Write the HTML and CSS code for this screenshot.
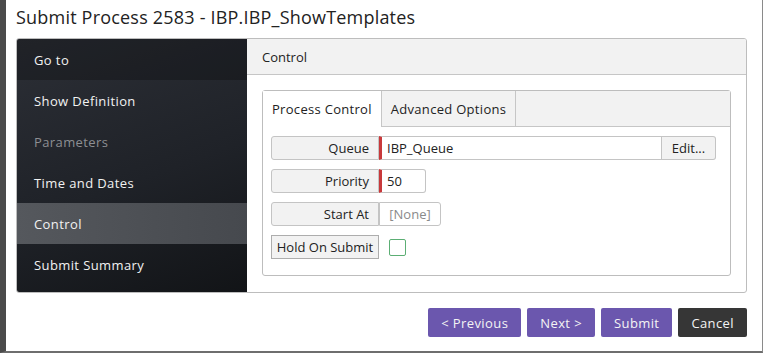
FILE: index.html
```html
<!DOCTYPE html>
<html lang="en">

<head>
    <meta charset="UTF-8">
    <title>Submit Process</title>
    <link rel="stylesheet" href="styles.css">
</head>

<body>
    <div class="dialog">
        <div class="dialog-title">Submit Process 2583 - IBP.IBP_ShowTemplates</div>

        <div class="panel">
            <div class="steps">
                <div class="step step-head">Go to</div>
                <div class="step">Show Definition</div>
                <div class="step disabled">Parameters</div>
                <div class="step">Time and Dates</div>
                <div class="step active">Control</div>
                <div class="step">Submit Summary</div>
            </div>

            <div class="content">
                <div class="content-header">Control</div>
                <div class="tabbox">
                    <div class="tabs">
                        <div class="tab active">Process Control</div>
                        <div class="tab">Advanced Options</div>
                    </div>
                    <div class="tab-body">
                        <div class="field">
                            <div class="field-label">Queue</div>
                            <div class="field-input required wide">IBP_Queue</div>
                            <div class="field-button">Edit...</div>
                        </div>
                        <div class="field">
                            <div class="field-label">Priority</div>
                            <div class="field-input required short">50</div>
                        </div>
                        <div class="field">
                            <div class="field-label">Start At</div>
                            <div class="field-input empty">[None]</div>
                        </div>
                        <div class="field">
                            <div class="field-label plain">Hold On Submit</div>
                            <span class="checkbox"></span>
                        </div>
                    </div>
                </div>
            </div>
        </div>

        <div class="footer">
            <button class="btn btn-primary">&lt; Previous</button>
            <button class="btn btn-primary">Next &gt;</button>
            <button class="btn btn-primary">Submit</button>
            <button class="btn btn-dark">Cancel</button>
        </div>
    </div>
</body>

</html>
```

FILE: styles.css
```css
* {
    margin: 0;
    padding: 0;
    box-sizing: border-box;
}

body {
    background-color: #fff;
    color: #222;
    font-family: "Open Sans", sans-serif;
    font-size: 13px;
}

.dialog {
    height: 353px;
    border-left: 6px solid #4b4b4b;
    border-right: 1px solid #8a8a8a;
    border-bottom: 2px solid #6e6e6e;
    padding: 0 15px 0 10px;
}

.dialog-title {
    font-size: 18px;
    color: #222;
    height: 38px;
    padding-top: 5px;
    letter-spacing: 0.2px;
}

.panel {
    display: flex;
    height: 255px;
    border: 1px solid #bdbdbd;
    border-radius: 3px;
    overflow: hidden;
}

.steps {
    width: 230px;
    flex-shrink: 0;
    background: linear-gradient(160deg, #2c2f36 0%, #1f2228 55%, #121417 100%);
}

.step {
    height: 41px;
    line-height: 40px;
    padding: 1px 0 0 17px;
    color: #f2f2f2;
    letter-spacing: 0.4px;
}

.step-head {
    background-color: rgba(0, 0, 0, 0.25);
}

.step.disabled {
    color: #8d8f93;
}

.step.active {
    background: linear-gradient(90deg, #55585d 0%, #46494e 100%);
}

.content {
    flex-grow: 1;
    display: flex;
    flex-direction: column;
}

.content-header {
    height: 36px;
    line-height: 34px;
    padding: 1px 0 0 15px;
    background-color: #f2f2f2;
    border-bottom: 1px solid #c6c6c6;
}

.tabbox {
    margin: 15px 15px 16px 15px;
    flex-grow: 1;
    border: 1px solid #bdbdbd;
    border-radius: 3px;
}

.tabs {
    display: flex;
    height: 36px;
    background-color: #f2f2f2;
    border-bottom: 1px solid #c6c6c6;
}

.tab {
    padding: 1px 9px 0;
    line-height: 34px;
    border-right: 1px solid #c6c6c6;
    letter-spacing: 0.3px;
}

.tab.active {
    background-color: #fff;
    height: 36px;
}

.tab-body {
    padding: 9px 14px 0 8px;
}

.field {
    display: flex;
    align-items: center;
    height: 24px;
    margin-bottom: 9px;
}

.field-label {
    width: 108px;
    height: 24px;
    line-height: 21px;
    padding-top: 1px;
    text-align: right;
    padding-right: 9px;
    background-color: #f2f2f2;
    border: 1px solid #c4c4c4;
    border-radius: 3px 0 0 3px;
}

.field-label.plain {
    border-color: #adadad;
    border-radius: 0;
    text-align: center;
    padding-right: 0;
}

.field-input {
    height: 24px;
    line-height: 21px;
    padding-top: 1px;
    border: 1px solid #c4c4c4;
    border-left: none;
    padding-left: 6px;
    background-color: #fff;
    border-radius: 0 3px 3px 0;
}

.field-input.required {
    border-left: 3px solid #c8393b;
    padding-left: 5px;
}

.field-input.wide {
    flex-grow: 1;
    border-radius: 0;
}

.field-input.short {
    width: 47px;
}

.field-input.empty {
    width: 62px;
    color: #8a8a8a;
    border-left: 1px solid #c4c4c4;
    text-align: center;
    padding-left: 0;
}

.field-button {
    width: 54px;
    height: 24px;
    line-height: 21px;
    padding-top: 1px;
    text-align: center;
    background-color: #f2f2f2;
    border: 1px solid #c4c4c4;
    border-left: none;
    border-radius: 0 3px 3px 0;
}

.checkbox {
    width: 17px;
    height: 17px;
    margin-left: 10px;
    border: 1px solid #5cae74;
    border-radius: 2px;
}

.footer {
    display: flex;
    justify-content: flex-end;
    gap: 6px;
    padding-top: 15px;
}

.btn {
    height: 29px;
    padding: 1px 13px 0;
    border: none;
    border-radius: 2px;
    color: #f4f4f4;
    font-family: inherit;
    font-size: 13px;
    letter-spacing: 0.4px;
}

.btn-primary {
    background-color: #6b57ae;
}

.btn-dark {
    background-color: #363636;
}
```
